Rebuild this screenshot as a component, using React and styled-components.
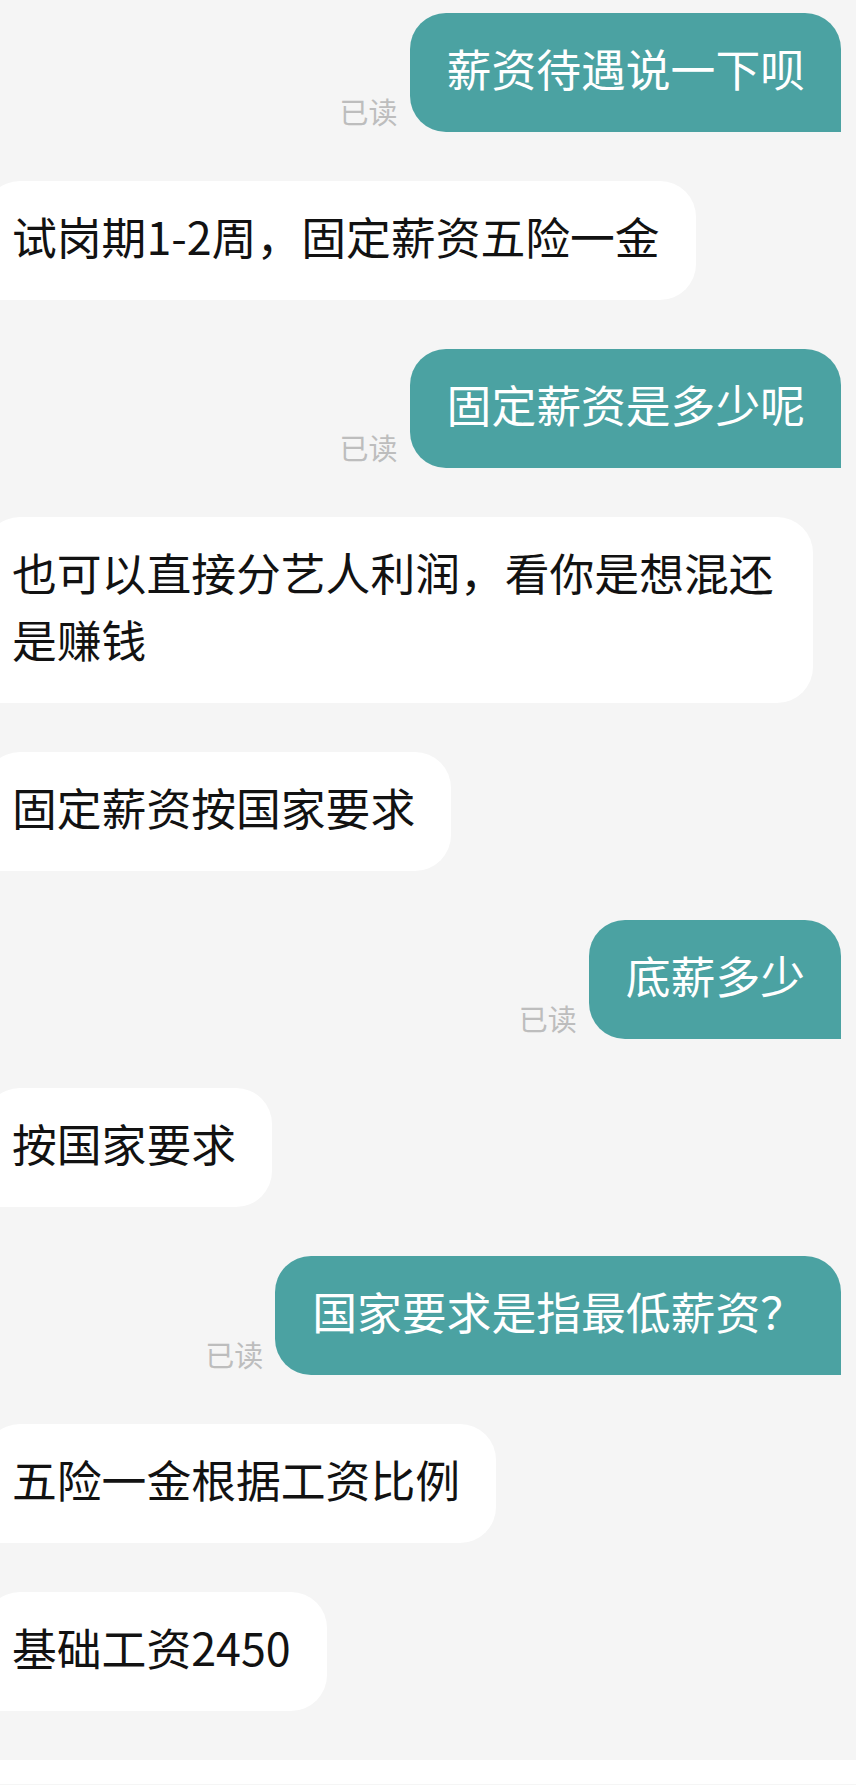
import React from "react";
import styled, { createGlobalStyle } from "styled-components";

const Global = createGlobalStyle`
  html, body {
    margin: 0;
    padding: 0;
    background: #f5f5f5;
    overflow-x: hidden;
  }
  body {
    font-family: "Noto Sans CJK SC", "Noto Sans", sans-serif;
    -webkit-font-smoothing: antialiased;
  }
`;

const Thread = styled.div`
  display: flex;
  flex-direction: column;
  gap: 49px;
  padding-top: 13px;
  min-height: 1785px;
  box-sizing: border-box;
`;

const Row = styled.div`
  display: flex;
  align-items: flex-end;
  justify-content: ${(p) => (p.$out ? "flex-end" : "flex-start")};
  gap: 12px;
  padding-right: ${(p) => (p.$out ? "15px" : "0")};
`;

const ReadMark = styled.span`
  font-size: 29px;
  line-height: 1;
  color: #bdbdbd;
  margin-bottom: 6px;
  white-space: nowrap;
`;

const Bubble = styled.div`
  font-size: 44.8px;
  line-height: 67px;
  box-sizing: border-box;
  padding: 21px 36px 31px ${(p) => (p.$out ? "37px" : "28px")};
  margin-left: ${(p) => (p.$out ? "0" : "-16px")};
  max-width: ${(p) => (p.$out ? "720px" : "829px")};
  background: ${(p) => (p.$out ? "#4ba2a2" : "#ffffff")};
  color: ${(p) => (p.$out ? "#ffffff" : "#121212")};
  border-radius: ${(p) => (p.$out ? "36px 36px 0 36px" : "36px 36px 36px 0")};
  word-break: break-all;
`;

const BottomBar = styled.div`
  height: 24px;
  background: #ffffff;
`;

const messages = [
  { out: true, text: "薪资待遇说一下呗" },
  { out: false, text: "试岗期1-2周，固定薪资五险一金" },
  { out: true, text: "固定薪资是多少呢" },
  { out: false, text: "也可以直接分艺人利润，看你是想混还是赚钱" },
  { out: false, text: "固定薪资按国家要求" },
  { out: true, text: "底薪多少" },
  { out: false, text: "按国家要求" },
  { out: true, text: "国家要求是指最低薪资？" },
  { out: false, text: "五险一金根据工资比例" },
  { out: false, text: "基础工资2450" },
];

export default function App() {
  return (
    <>
      <Global />
      <Thread>
        {messages.map((m, i) => (
          <Row key={i} $out={m.out}>
            {m.out && <ReadMark>已读</ReadMark>}
            <Bubble $out={m.out}>{m.text}</Bubble>
          </Row>
        ))}
        <BottomBar />
      </Thread>
    </>
  );
}
